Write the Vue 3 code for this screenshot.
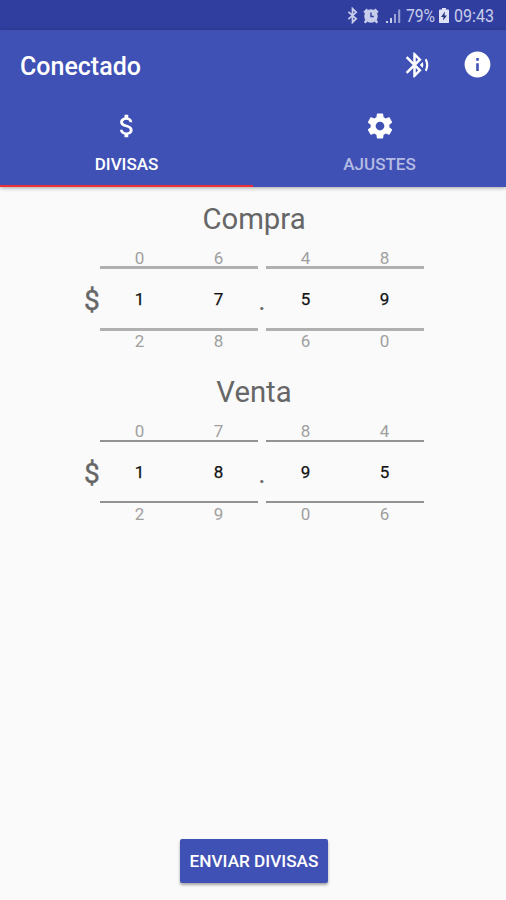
<template>
  <div class="screen">
    <header class="status-bar">
      <svg class="status-bt" viewBox="0 0 12 18">
        <path d="M1.5 5 10 12.5 6 16.5V1.5L10 5.5 1.5 13" />
      </svg>
      <svg class="status-alarm" viewBox="0 0 16 16">
        <circle cx="8" cy="8" r="6.8" class="solid" />
        <path d="M1.2 4.6 4.4 1.4M14.8 4.6 11.6 1.4M3.6 12.2 1.8 14.8M12.4 12.2 14.2 14.8" class="legs" />
        <path d="M8 4.5V8.5H10.8" class="hands" />
      </svg>
      <svg class="status-signal" viewBox="0 0 15 16">
        <path d="M1 13v2M5 10v5" />
        <path d="M9 6v9M13.2 1.5V15" class="weak" />
      </svg>
      <span class="status-percent">79%</span>
      <svg class="status-battery" viewBox="0 0 10 15">
        <path d="M3 0h4v1.6h2.2q.8 0 .8.8v11.8q0 .8-.8.8H.8Q0 15 0 14.2V2.4q0-.8.8-.8H3z" class="shell" />
        <path d="M6 3.5 2 9h2.5L4 12.5 8 7.5H5.5z" class="bolt" />
      </svg>
      <span class="status-time">09:43</span>
    </header>

    <div class="app-bar">
      <div class="toolbar">
        <h1 class="toolbar-title">Conectado</h1>
        <button class="icon-button" aria-label="Bluetooth">
          <svg width="30" height="30" viewBox="0 0 24 24">
            <path
              d="M14.24 12.01l2.32 2.32c.28-.72.44-1.51.44-2.33 0-.82-.16-1.59-.43-2.31l-2.33 2.32zm5.29-5.3l-1.26 1.26c.63 1.21.98 2.57.98 4.02s-.36 2.82-.98 4.02l1.2 1.2c.97-1.54 1.54-3.36 1.54-5.31-.01-1.89-.55-3.67-1.48-5.19zm-3.82 1L10 2H9v7.59L4.41 5 3 6.41 8.59 12 3 17.59 4.41 19 9 14.41V22h1l5.71-5.71-4.3-4.29 4.3-4.29zM11 5.83l1.88 1.88L11 9.59V5.83zm1.88 10.46L11 18.17v-3.76l1.88 1.88z"
            />
          </svg>
        </button>
        <button class="icon-button info" aria-label="Información">
          <svg width="31" height="31" viewBox="0 0 24 24">
            <path
              d="M12 2C6.48 2 2 6.48 2 12s4.48 10 10 10 10-4.48 10-10S17.52 2 12 2zm1 15h-2v-6h2v6zm0-8h-2V7h2v2z"
            />
          </svg>
        </button>
      </div>

      <nav class="tabs">
        <button
          v-for="tab in tabs"
          :key="tab.id"
          class="tab"
          :class="{ active: tab.id === activeTab }"
          @click="activeTab = tab.id"
        >
          <svg width="30" height="30" viewBox="0 0 24 24">
            <path :d="tab.icon" />
          </svg>
          <span>{{ tab.label }}</span>
        </button>
      </nav>
    </div>

    <main class="content">
      <section v-for="rate in rates" :key="rate.title" class="rate" :class="rate.style">
        <h2 class="rate-title">{{ rate.title }}</h2>
        <div class="rate-row">
          <span class="currency">$</span>
          <template v-for="(group, g) in rate.groups" :key="g">
            <span v-if="g > 0" class="point">.</span>
            <div class="picker">
              <div v-for="(digit, d) in group" :key="d" class="wheel">
                <span class="near">{{ (digit + 9) % 10 }}</span>
                <span class="value">{{ digit }}</span>
                <span class="near below">{{ (digit + 1) % 10 }}</span>
              </div>
            </div>
          </template>
        </div>
      </section>
    </main>

    <button class="send">ENVIAR DIVISAS</button>
  </div>
</template>

<script setup>
import { ref } from 'vue'

const activeTab = ref('divisas')

const tabs = [
  {
    id: 'divisas',
    label: 'DIVISAS',
    icon: 'M11.8 10.9c-2.27-.59-3-1.2-3-2.15 0-1.09 1.01-1.85 2.7-1.85 1.78 0 2.44.85 2.5 2.1h2.21c-.07-1.72-1.12-3.3-3.21-3.81V3h-3v2.16c-1.94.42-3.5 1.68-3.5 3.61 0 2.31 1.91 3.46 4.7 4.13 2.5.6 3 1.48 3 2.41 0 .69-.49 1.79-2.7 1.79-2.06 0-2.87-.92-2.98-2.1h-2.2c.12 2.19 1.76 3.42 3.68 3.83V21h3v-2.15c1.95-.37 3.5-1.5 3.5-3.55 0-2.84-2.43-3.81-4.7-4.4z',
  },
  {
    id: 'ajustes',
    label: 'AJUSTES',
    icon: 'M19.43 12.98c.04-.32.07-.64.07-.98s-.03-.66-.07-.98l2.11-1.65c.19-.15.24-.42.12-.64l-2-3.46c-.12-.22-.39-.3-.61-.22l-2.49 1c-.52-.4-1.08-.73-1.69-.98l-.38-2.65C14.46 2.18 14.25 2 14 2h-4c-.25 0-.46.18-.49.42l-.38 2.65c-.61.25-1.17.59-1.69.98l-2.49-1c-.23-.09-.49 0-.61.22l-2 3.46c-.13.22-.07.49.12.64l2.11 1.65c-.04.32-.07.65-.07.98s.03.66.07.98l-2.11 1.65c-.19.15-.24.42-.12.64l2 3.46c.12.22.39.3.61.22l2.49-1c.52.4 1.08.73 1.69.98l.38 2.65c.03.24.24.42.49.42h4c.25 0 .46-.18.49-.42l.38-2.65c.61-.25 1.17-.59 1.69-.98l2.49 1c.23.09.49 0 .61-.22l2-3.46c.12-.22.07-.49-.12-.64l-2.11-1.65zM12 15.5c-1.93 0-3.5-1.57-3.5-3.5s1.57-3.5 3.5-3.5 3.5 1.57 3.5 3.5-1.57 3.5-3.5 3.5z',
  },
]

const rates = [
  { title: 'Compra', style: 'buy', groups: [[1, 7], [5, 9]] },
  { title: 'Venta', style: 'sell', groups: [[1, 8], [9, 5]] },
]
</script>

<style>
body {
  background: #fafafa;
}
</style>

<style scoped>
.screen {
  display: flex;
  flex-direction: column;
  height: 900px;
  background: #fafafa;
  font-family: Roboto, sans-serif;
}
button {
  border: none;
  padding: 0;
  background: none;
  font-family: inherit;
}
svg {
  display: block;
  flex: none;
}

/* Status bar */
.status-bar {
  display: flex;
  align-items: center;
  justify-content: flex-end;
  height: 30px;
  padding: 1px 12px 0 0;
  box-sizing: border-box;
  background: #303f9f;
  color: #c9cdec;
  font-size: 18px;
}
.status-bar svg {
  fill: none;
  stroke: #c9cdec;
}
.status-bt {
  width: 11px;
  height: 17px;
  margin-right: 5px;
  stroke-width: 1.9;
}
.status-alarm {
  width: 16px;
  height: 16px;
  margin-right: 7px;
}
.status-alarm .solid {
  fill: #c9cdec;
  stroke: none;
}
.status-alarm .legs {
  stroke-width: 2.4;
}
.status-alarm .hands {
  stroke: #303f9f;
  stroke-width: 1.4;
}
.status-signal {
  width: 15px;
  height: 16px;
  margin-right: 5px;
  stroke-width: 2;
}
.status-signal .weak {
  opacity: 0.7;
}
.status-percent {
  width: 29px;
  white-space: nowrap;
  transform: scaleX(0.87);
  transform-origin: left;
}
.status-bar .status-battery {
  width: 10px;
  height: 15px;
  margin: 0 5px 0 4px;
  stroke: none;
}
.status-battery .shell {
  fill: #dfe2f6;
}
.status-battery .bolt {
  fill: #26327f;
}
.status-time {
  width: 40px;
  white-space: nowrap;
  transform: scaleX(0.89);
  transform-origin: left;
}

/* App bar */
.app-bar {
  height: 157px;
  background: #3f51b5;
  box-shadow: 0 1px 4px rgba(0, 0, 0, 0.35);
}
.toolbar {
  display: flex;
  align-items: center;
  height: 69px;
  padding: 0 13px 0 20px;
}
.toolbar-title {
  flex: 1;
  margin: 4px 0 0;
  color: #fff;
  font-size: 25px;
  font-weight: 500;
}
.icon-button {
  margin-right: 30px;
  fill: #fff;
}
.icon-button.info {
  margin-right: 0;
}
.tabs {
  display: flex;
  height: 88px;
}
.tab {
  display: flex;
  flex: 1;
  flex-direction: column;
  align-items: center;
  padding-top: 12px;
  box-sizing: border-box;
  border-bottom: 2px solid transparent;
  color: #b5bce3;
  fill: #fff;
  font-size: 17px;
  font-weight: 500;
  line-height: 20px;
}
.tab span {
  margin-top: 13px;
}
.tab.active {
  border-color: #ec2f38;
  color: #fff;
}

/* Rates */
.content {
  flex: 1;
  color: #666;
}
.rate {
  height: 173px;
}
.rate-title {
  margin: 0;
  padding: 14px 0 0 2px;
  height: 47px;
  font-size: 29.3px;
  font-weight: 400;
  line-height: 36px;
  text-align: center;
}
.rate-row {
  display: flex;
  align-items: center;
  height: 103px;
  padding-left: 84px;
}
.currency {
  width: 16px;
  padding-top: 1px;
  font-size: 28px;
  -webkit-text-stroke: 0.4px #666;
}
.point {
  width: 8px;
  padding-top: 2px;
  font-size: 28px;
  text-align: center;
}
.picker {
  display: flex;
  width: 158px;
}
.wheel {
  display: grid;
  flex: 1;
  grid-template-rows: 19px 65px 21px;
  font-size: 17px;
  text-align: center;
}
.value {
  display: flex;
  align-items: center;
  justify-content: center;
  border: solid #b0b0b0;
  border-width: 3px 0;
  color: #111;
  -webkit-text-stroke: 0.25px #111;
}
.sell .value {
  margin: 1px 0;
  border-color: #929292;
  border-width: 2px 0;
}
.near {
  color: #a0a0a0;
  line-height: 22px;
}
.near.below {
  line-height: 20px;
}

.send {
  align-self: center;
  width: 148px;
  height: 44px;
  margin: 0 0 17px 2px;
  border-radius: 2px;
  background: #3f51b5;
  box-shadow: 0 2px 3px rgba(0, 0, 0, 0.35);
  color: #fff;
  font-size: 17.2px;
  font-weight: 500;
}
</style>
